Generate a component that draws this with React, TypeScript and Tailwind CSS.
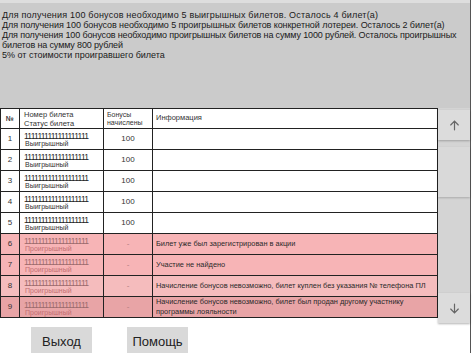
import React from "react";

type Row = {
  n: number;
  win: boolean;
  info?: string;
  bg: string;
};

const rows: Row[] = [
  { n: 1, win: true, bg: "bg-white" },
  { n: 2, win: true, bg: "bg-white" },
  { n: 3, win: true, bg: "bg-white" },
  { n: 4, win: true, bg: "bg-white" },
  { n: 5, win: true, bg: "bg-white" },
  { n: 6, win: false, info: "Билет уже был зарегистрирован в акции", bg: "bg-[#f7b4b6]" },
  { n: 7, win: false, info: "Участие не найдено", bg: "bg-[#f7b4b6]" },
  { n: 8, win: false, info: "Начисление бонусов невозможно, билет куплен без указания № телефона ПЛ", bg: "bg-[#f5bcbd]" },
  { n: 9, win: false, info: "Начисление бонусов невозможно, билет был продан другому участнику программы лояльности", bg: "bg-[#e8a4a6]" },
];

const cols = "grid grid-cols-[19px_84px_49px_285px]";

export default function App() {
  return (
    <div className="w-[474px] h-[353px] bg-white overflow-hidden font-['Liberation_Sans',Arial,sans-serif] text-[#222]">
      <div className="w-[471px] h-full border-r border-[#555] flex flex-col">
        <div className="h-[108px] shrink-0 bg-[#cbcbcb] border-t-[3px] border-[#dedede] pl-[2px] pt-[7px] text-[9px] leading-[10px] text-[#1a1a1a] whitespace-nowrap">
          <p className="tracking-[0.2px]">Для получения 100 бонусов необходимо 5 выигрышных билетов. Осталось 4 билет(а)</p>
          <p className="tracking-[-0.08px]">Для получения 100 бонусов необходимо 5 проигрышных билетов конкретной лотереи. Осталось 2 билет(а)</p>
          <p className="tracking-[-0.13px]">
            Для получения 100 бонусов необходимо проигрышных билетов на сумму 1000 рублей. Осталось проигрышных
            <br />
            билетов на сумму 800 рублей
          </p>
          <p>5% от стоимости проигравшего билета</p>
        </div>

        <div className="flex h-[215px] shrink-0">
          <div className="w-[438px] flex flex-col">
            <div className="border-t border-l border-[#222]">
              <div className={`${cols} h-[20px] bg-white border-b border-[#222] text-[7.5px] leading-[9px] text-[#333]`}>
                <div className="border-r border-[#222] flex items-center justify-center font-bold text-[7px]">№</div>
                <div className="border-r border-[#222] pl-[4px] pt-[1px]">
                  <div>Номер билета</div>
                  <div>Статус билета</div>
                </div>
                <div className="border-r border-[#222] pl-[3px] pt-[2px] leading-[8px] text-[7px]">
                  <div>Бонусы</div>
                  <div>начислены</div>
                </div>
                <div className="border-r border-[#222] pl-[3px] pt-[4px]">Информация</div>
              </div>
              {rows.map((r) => (
                <div key={r.n} className={`${cols} h-[21px] border-b border-[#222] ${r.bg}`}>
                  <div className="border-r border-[#222] flex items-center justify-center text-[8px] text-[#333]">{r.n}</div>
                  <div className={`border-r border-[#222] pl-[4px] leading-[8px] ${r.n === 9 ? "pt-[4px]" : "pt-[3px]"}`}>
                    <div className={`text-[8.5px] tracking-[-0.75px] ${r.win ? "text-[#222]" : "text-[#9a6a6c]"}`}>1111111111111111111</div>
                    <div className={`text-[7px] pl-[1px] ${r.win ? "text-[#333]" : "text-[#c26f72]"}`}>{r.win ? "Выигрышный" : "Проигрышный"}</div>
                  </div>
                  <div className={`border-r border-[#222] flex items-center justify-center text-[8px] ${r.win ? "text-[#333]" : "text-[#b07c7e]"}`}>{r.win ? "100" : "-"}</div>
                  <div className="border-r border-[#222] flex items-center pl-[3px] pr-[2px] text-[7.4px] leading-[10px] text-[#2a2a2a]">{r.info}</div>
                </div>
              ))}
            </div>
          </div>

          <div className="w-[32px] h-[215px] bg-[#d4d4d4] flex flex-col pt-[2px]">
            <div className="h-[30px] bg-[#dcdcdc] shadow-[0_1px_2px_rgba(0,0,0,0.25)] flex items-center justify-center text-[#666]">
              <svg width="13" height="13" viewBox="0 0 24 24" fill="none" stroke="currentColor" strokeWidth="2.2" strokeLinecap="round">
                <path d="M12 20V4M5 11l7-7 7 7" />
              </svg>
            </div>
            <div className="mt-[7px] h-[50px] bg-[#d9d9d9] shadow-[0_1px_2px_rgba(0,0,0,0.2)]" />
            <div className="flex-1" />
            <div className="h-[30px] bg-[#dcdcdc] shadow-[0_1px_2px_rgba(0,0,0,0.3)] flex items-center justify-center text-[#666]">
              <svg width="13" height="13" viewBox="0 0 24 24" fill="none" stroke="currentColor" strokeWidth="2.2" strokeLinecap="round">
                <path d="M12 4v16M5 13l7 7 7-7" />
              </svg>
            </div>
          </div>
        </div>

        <div className="flex gap-[35px] pl-[31px] pt-[4px]">
          <button className="w-[61px] h-[30px] bg-[#d9d9d9] text-[13px] text-[#222] font-['Liberation_Sans',Arial,sans-serif]">Выход</button>
          <button className="w-[61px] h-[30px] bg-[#d9d9d9] text-[13px] text-[#222] font-['Liberation_Sans',Arial,sans-serif]">Помощь</button>
        </div>
      </div>
    </div>
  );
}
